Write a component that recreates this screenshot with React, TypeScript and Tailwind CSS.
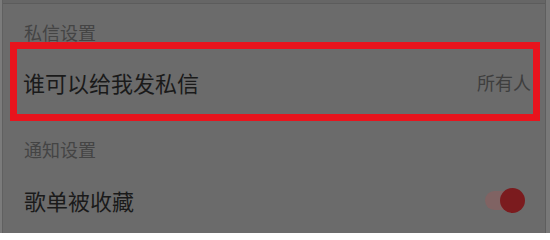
import React from 'react'

const SectionHeader = ({ title, className }: { title: string; className: string }) => (
  <div className={`flex items-end pl-[21px] text-[18px] leading-[18px] text-[#444444] ${className}`}>
    {title}
  </div>
)

const Toggle = () => (
  <div className="relative w-[40px] h-[25px]">
    <div className="absolute left-0 right-[4px] top-[3px] h-[19px] rounded-full bg-[#806363]" />
    <div className="absolute right-0 top-0 w-[25px] h-[25px] rounded-full bg-[#7b1b1e]" />
  </div>
)

export default function App() {
  return (
    <div
      className="w-[550px] h-[233px] flex bg-[#6b6b6b] overflow-hidden"
      style={{ fontFamily: '"Noto Sans CJK SC", "Noto Sans", sans-serif' }}
    >
      <div className="w-[3px] bg-[#7b7b7b] border-r border-[#606060]" />
      <div className="flex-1 flex flex-col">
        <div className="h-[4px] bg-[#666666] border-b border-[#5c5c5c]" />
        <SectionHeader title="私信设置" className="h-[38px] pb-[1px]" />

        <div className="ml-[7px] mr-[5px] h-[79px] border-[7px] border-[#e8141d] flex items-center justify-between pl-[6px] pr-[2px]">
          <span className="text-[22px] leading-[22px] text-[#1a1a1a]">谁可以给我发私信</span>
          <span className="text-[18px] leading-[18px] text-[#3e3e3e]">所有人</span>
        </div>

        <SectionHeader title="通知设置" className="h-[46px] pb-[9px]" />

        <div className="flex-1 flex items-center justify-between pl-[21px] pr-[20px]">
          <span className="text-[22px] leading-[22px] text-[#1a1a1a]">歌单被收藏</span>
          <Toggle />
        </div>
      </div>
      <div className="w-[5px] bg-[#787878] border-l border-[#5e5e5e]" />
    </div>
  )
}
